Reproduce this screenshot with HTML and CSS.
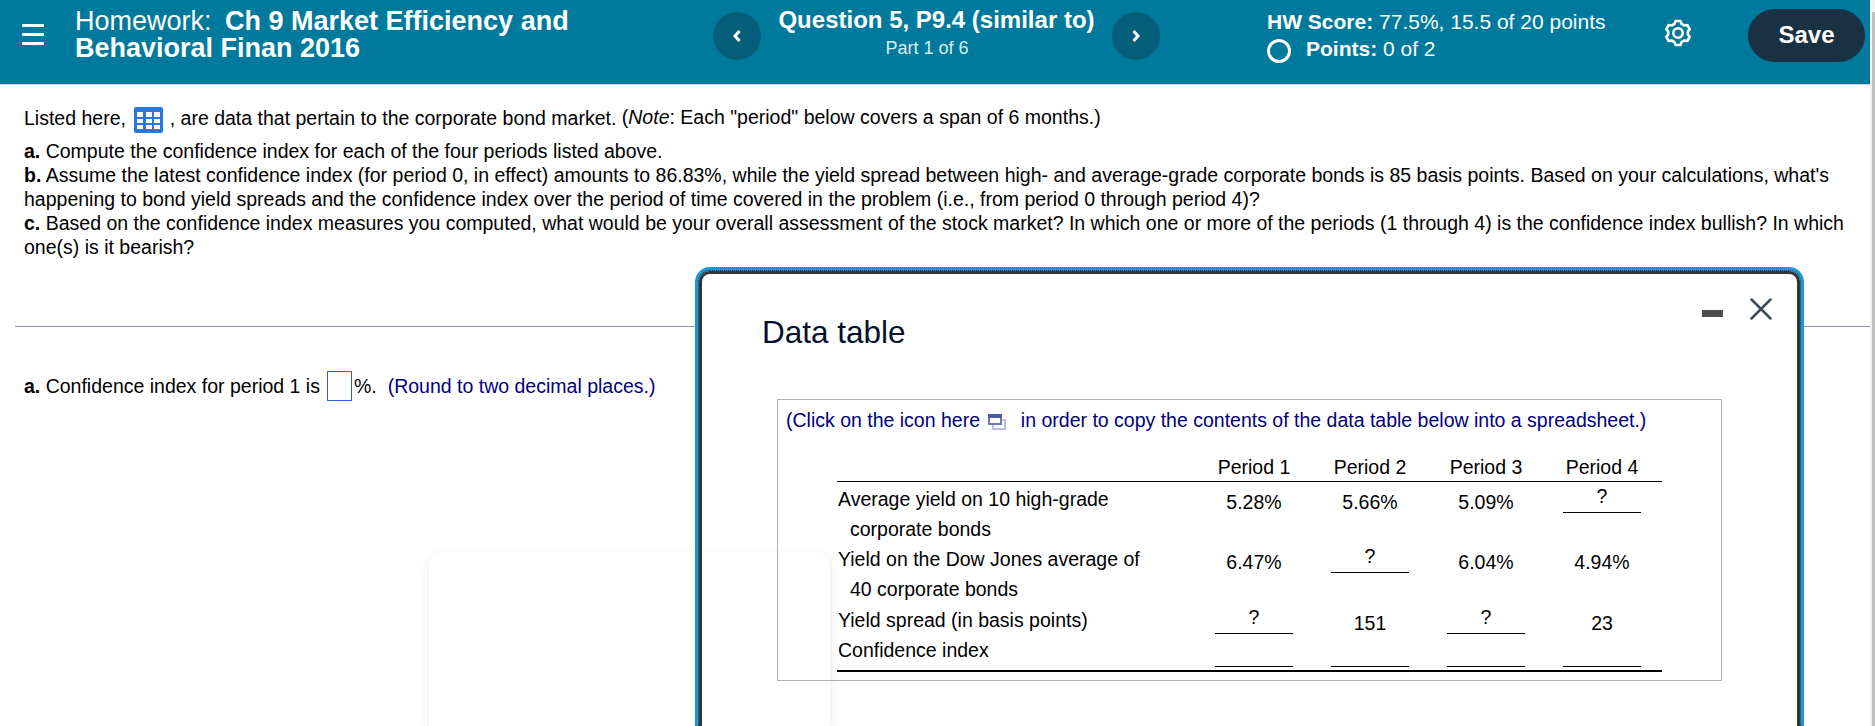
FILE: index.html
```
<!DOCTYPE html>
<html lang="en">

<head>
    <meta charset="UTF-8">
    <meta name="viewport" content="width=device-width, initial-scale=1.0">
    <title>Homework: Ch 9 Market Efficiency and Behavioral Finan 2016</title>
    <link rel="stylesheet" href="styles.css">
</head>

<body>

    <div class="page">
        <header class="topbar">
            <button type="button" class="menu" aria-label="Menu">
                <span></span>
                <span></span>
                <span></span>
            </button>

            <h1 class="title">Homework: <b>Ch 9 Market Efficiency and Behavioral Finan 2016</b></h1>

            <div class="question-nav">
                <button type="button" class="round" aria-label="Previous">
                    <svg width="8" height="12" viewBox="0 0 8 12"><path d="M6.5 1L2 6l4.5 5" /></svg>
                </button>
                <div class="question">
                    <h2>Question 5, P9.4 (similar to)</h2>
                    <p>Part 1 of 6</p>
                </div>
                <button type="button" class="round" aria-label="Next">
                    <svg width="8" height="12" viewBox="0 0 8 12"><path d="M1.5 1L6 6l-4.5 5" /></svg>
                </button>
            </div>

            <div class="score">
                <div><b>HW Score:</b> 77.5%, 15.5 of 20 points</div>
                <div class="points"><span class="ring"></span><b>Points:</b>&nbsp;0 of 2</div>
            </div>

            <button type="button" class="settings" aria-label="Settings">
                <svg width="28" height="28" viewBox="0 0 28 28">
                    <path d="M11.6 2h4.8l1.1 2.9 2.8 1.6 3-.5 2.4 4.1-1.9 2.4v3l1.9 2.4-2.4 4.1-3-.5-2.8 1.6L16.4 26h-4.8l-1.1-2.9-2.8-1.6-3 .5-2.4-4.1 1.9-2.4v-3L2.3 10.1 4.7 6l3 .5 2.8-1.6z" />
                    <circle cx="14" cy="14" r="4.7" />
                </svg>
            </button>

            <button type="button" class="save">Save</button>
        </header>

        <main>
            <section class="problem">
                <p class="intro">Listed here,
                    <svg class="table-icon" width="29" height="26" viewBox="0 0 29 26">
                        <rect width="29" height="26" rx="2" fill="#2678dc" />
                        <g fill="#fff">
                            <rect x="3" y="5" width="6" height="5" /><rect x="12" y="5" width="6" height="5" /><rect x="20" y="5" width="6" height="5" />
                            <rect x="3" y="12" width="6" height="4" /><rect x="12" y="12" width="6" height="4" /><rect x="20" y="12" width="6" height="4" />
                            <rect x="3" y="18" width="6" height="4" /><rect x="12" y="18" width="6" height="4" /><rect x="20" y="18" width="6" height="4" />
                        </g>
                    </svg>
                    , are data that pertain to the corporate bond market. <span class="note">(<i>Note</i>: Each "period" below covers a span of 6 months.)</span></p>
                <p><b>a.</b> Compute the confidence index for each of the four periods listed above.</p>
                <p><b>b.</b> Assume the latest confidence index (for period 0, in effect) amounts to 86.83%, while the yield spread between high- and average-grade corporate bonds is 85 basis points. Based on your calculations, what's<br>happening to bond yield spreads and the confidence index over the period of time covered in the problem (i.e., from period 0 through period 4)?</p>
                <p><b>c.</b> Based on the confidence index measures you computed, what would be your overall assessment of the stock market? In which one or more of the periods (1 through 4) is the confidence index bullish? In which<br>one(s) is it bearish?</p>
            </section>

            <form class="answer">
                <label for="answer"><b>a.</b> Confidence index for period 1 is</label>
                <input type="text" id="answer" name="answer">
                <span>%.</span>
                <span class="hint">(Round to two decimal places.)</span>
            </form>
        </main>
    </div>

    <div class="scrollbar"><div class="thumb"></div></div>

    <div class="dialog">
        <div class="dialog-header">
            <h3>Data table</h3>
            <div class="window-buttons">
                <span class="minimize"></span>
                <svg class="close" width="22" height="22" viewBox="0 0 22 22"><path d="M1.5 1.5l19 19M20.5 1.5l-19 19" /></svg>
            </div>
        </div>

        <div class="table-container">
            <p class="copy">(Click on the icon here
                <svg class="copy-icon" width="18" height="16" viewBox="0 0 18 16">
                    <rect x="5" y="6" width="12" height="9" fill="#fff" stroke="#b9bfe0" stroke-width="2" />
                    <rect x="1" y="1" width="12" height="9" fill="#fff" stroke="#6d79ba" stroke-width="2" />
                    <rect width="14" height="4" fill="#4e5ca8" />
                </svg>
                in order to copy the contents of the data table below into a spreadsheet.)</p>

            <table>
                <thead>
                    <tr>
                        <th></th>
                        <th>Period 1</th>
                        <th>Period 2</th>
                        <th>Period 3</th>
                        <th>Period 4</th>
                    </tr>
                </thead>
                <tbody>
                    <tr class="first">
                        <td>Average yield on 10 high-grade<br><span class="indent">corporate bonds</span></td>
                        <td><span class="value">5.28%</span></td>
                        <td><span class="value">5.66%</span></td>
                        <td><span class="value">5.09%</span></td>
                        <td><span class="blank">?</span></td>
                    </tr>
                    <tr>
                        <td>Yield on the Dow Jones average of<br><span class="indent">40 corporate bonds</span></td>
                        <td><span class="value">6.47%</span></td>
                        <td><span class="blank">?</span></td>
                        <td><span class="value">6.04%</span></td>
                        <td><span class="value">4.94%</span></td>
                    </tr>
                    <tr class="single">
                        <td>Yield spread (in basis points)</td>
                        <td><span class="blank">?</span></td>
                        <td><span class="value">151</span></td>
                        <td><span class="blank">?</span></td>
                        <td><span class="value">23</span></td>
                    </tr>
                    <tr class="last">
                        <td>Confidence index</td>
                        <td><span class="blank"></span></td>
                        <td><span class="blank"></span></td>
                        <td><span class="blank"></span></td>
                        <td><span class="blank"></span></td>
                    </tr>
                </tbody>
            </table>
        </div>
    </div>

    <div class="ghost-panel"></div>

</body>
</html>
```
FILE: styles.css
```
* {
    box-sizing: border-box;
}

body {
    font-family: "Liberation Sans", Arial, sans-serif;
    font-size: 19.5px;
    line-height: 24px;
    color: #000;
    background-color: #fff;
    margin: 0;
    height: 726px;
    display: flex;
    position: relative;
    overflow: hidden;
}

h1,
h2,
h3,
p {
    margin: 0;
    font-weight: normal;
}

button {
    font-family: inherit;
    border: none;
    padding: 0;
    cursor: pointer;
}

.page {
    width: 1870px;
}

/* Top bar */
.topbar {
    display: flex;
    align-items: flex-start;
    height: 85px;
    background-color: #007a9c;
    border-bottom: 1px solid #c7cfdf;
    color: #fff;
}

.menu {
    display: flex;
    flex-direction: column;
    gap: 6px;
    width: 22px;
    margin: 24px 0 0 22px;
    background: none;
}

.menu span {
    height: 3px;
    border-radius: 1px;
    background-color: #fff;
}

.title {
    width: 519px;
    margin: 8px 0 0 31px;
    font-size: 27px;
    line-height: 27px;
}

.title b {
    margin-left: 6px;
}

.question-nav {
    display: flex;
    justify-content: space-between;
    width: 447px;
    margin: 12px 0 0 119px;
}

.round {
    display: flex;
    align-items: center;
    justify-content: center;
    width: 48px;
    height: 48px;
    border-radius: 50%;
    background-color: #055f7a;
}

.round svg {
    fill: none;
    stroke: #fff;
    stroke-width: 3;
}

.question {
    text-align: center;
}

.question h2 {
    margin-top: -6px;
    font-size: 24px;
    font-weight: bold;
    line-height: 28px;
}

.question p {
    margin-top: 2px;
    padding-right: 19px;
    font-size: 18px;
    color: #d9edf2;
}

.score {
    width: 380px;
    margin: 8px 0 0 107px;
    font-size: 21px;
    line-height: 27px;
}

.points {
    display: flex;
}

.ring {
    width: 24px;
    height: 24px;
    margin: 4px 15px 0 0;
    border: 3px solid #fff;
    border-radius: 50%;
}

.settings {
    width: 28px;
    height: 28px;
    margin: 19px 0 0 17px;
    background: none;
}

.settings svg {
    display: block;
    fill: none;
    stroke: #fff;
    stroke-width: 2.6;
    stroke-linejoin: round;
}

.save {
    width: 117px;
    height: 53px;
    margin: 9px 0 0 56px;
    padding-bottom: 2px;
    border-radius: 27px;
    background-color: #183244;
    color: #fff;
    font-size: 24px;
    font-weight: bold;
}

/* Question text */
.problem {
    height: 241px;
    padding: 21px 0 0 24px;
    white-space: nowrap;
}

.intro {
    height: 33px;
}

.table-icon {
    margin: 0 1px 0 3px;
    vertical-align: -8px;
}

.note {
    position: relative;
    top: -1px;
}

.answer {
    display: flex;
    align-items: center;
    margin-left: 15px;
    padding: 44px 0 0 9px;
    border-top: 1px solid #8a93ab;
}

.answer input {
    width: 25px;
    height: 30px;
    margin: 0 2px 0 7px;
    padding: 0;
    border: 1px solid #2a62d0;
}

.hint {
    margin-left: 11px;
    color: #000080;
}

.scrollbar {
    width: 5px;
    padding: 12px 0 0 2px;
    background-color: #f1f1f1;
}

.thumb {
    height: 100%;
    background-color: #c1c1c1;
}

/* Data table window */
.dialog {
    position: absolute;
    left: 695px;
    top: 267px;
    width: 1109px;
    height: 459px;
    border: 4px solid #1a98d5;
    border-bottom: none;
    border-radius: 15px 15px 0 0;
    background-color: #fff;
    padding: 0 78px;
}

.dialog::before {
    content: "";
    position: absolute;
    inset: 0;
    border: 3px solid #333638;
    border-bottom: none;
    border-radius: 11px 11px 0 0;
}

.dialog::after {
    content: "";
    position: absolute;
    inset: -1px -1px 0;
    border: 1px dotted #333638;
    border-bottom: none;
    border-radius: 12px 12px 0 0;
}

.dialog-header {
    display: flex;
    justify-content: space-between;
    height: 128px;
}

.dialog-header h3 {
    margin: 41px 0 0 -15px;
    font-size: 31.5px;
    line-height: 40px;
    color: #05112a;
}

.window-buttons {
    display: flex;
    gap: 27px;
    margin: 27px -50px 0 0;
}

.minimize {
    width: 21px;
    height: 7px;
    margin-top: 12px;
    background-color: #4d4d4d;
}

.close {
    fill: none;
    stroke: #3d4b5a;
    stroke-width: 2.5;
    stroke-linecap: round;
}

.table-container {
    width: 945px;
    height: 282px;
    padding: 8px 0 0 8px;
    border: 1px solid #b3b3b3;
}

.copy {
    height: 24px;
    color: #000080;
    white-space: nowrap;
}

.copy-icon {
    margin: 0 9px 0 3px;
    vertical-align: -3px;
}

table {
    width: 825px;
    margin: 23px 0 0 51px;
    border-collapse: separate;
    border-spacing: 0;
    border-bottom: 2px solid #000;
    table-layout: fixed;
}

th,
td {
    width: 116px;
    padding: 0;
    font-weight: normal;
    text-align: center;
    vertical-align: top;
}

th {
    height: 27px;
    border-bottom: 1px solid #000;
}

th:first-child,
td:first-child {
    width: 359px;
    padding-left: 1px;
    text-align: left;
    line-height: 30px;
}

th:last-child,
td:last-child {
    width: 118px;
    padding-right: 2px;
}

td {
    height: 61px;
}

.first td {
    height: 62px;
    padding-top: 2px;
}

.single td {
    height: 30px;
}

.last td {
    height: 35px;
}

.indent {
    padding-left: 12px;
}

.value {
    display: block;
    margin-top: 6px;
}

.blank {
    display: block;
    width: 78px;
    height: 29px;
    margin: 0 auto;
    border-bottom: 1px solid #000;
}

.last .blank {
    margin-top: 3px;
}

/* Faint panel sliding in from below */
.ghost-panel {
    position: absolute;
    left: 429px;
    top: 552px;
    width: 401px;
    height: 174px;
    border-radius: 13px 13px 0 0;
    box-shadow: 0 3px 10px rgba(0, 0, 0, 0.1);
}
```
